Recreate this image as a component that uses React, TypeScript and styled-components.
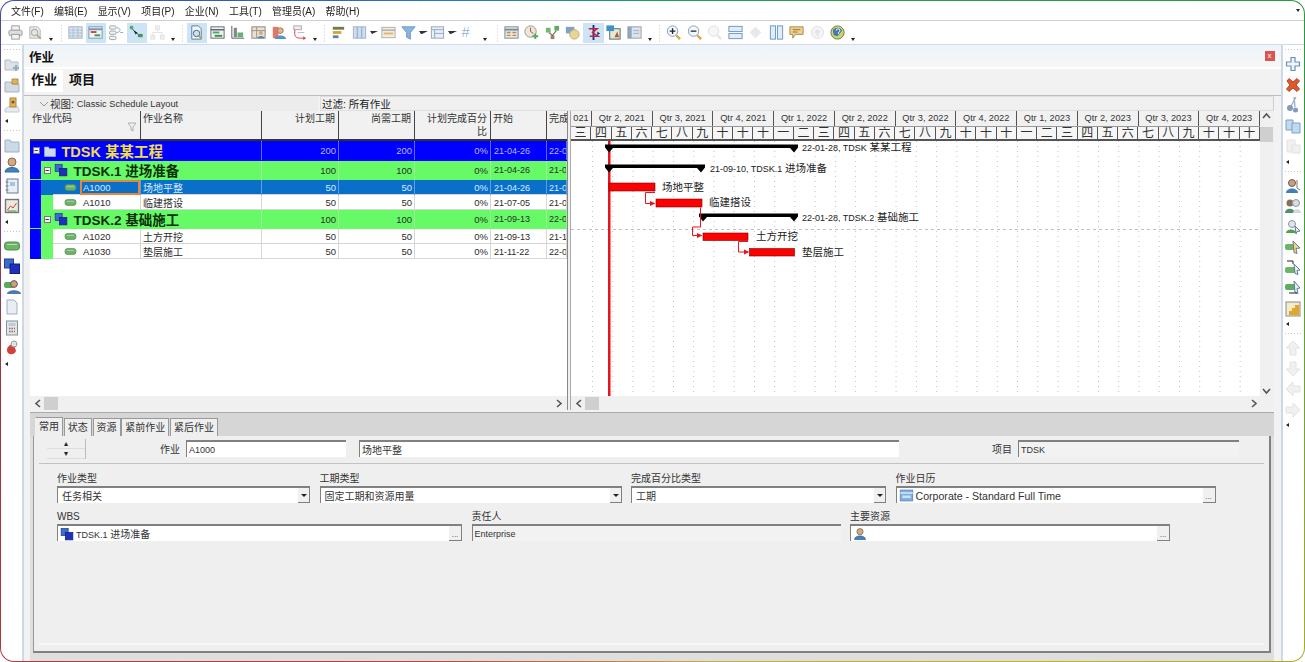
import { ReactNode } from "react";
import styled, { createGlobalStyle } from "styled-components";

const FONT = `"Liberation Sans", "Noto Sans CJK SC", sans-serif`;

const GlobalStyle = createGlobalStyle`
  html, body { margin: 0; padding: 0; background: #fff; }
  body { font-family: ${FONT}; font-size: 10px; color: #2b2b2b; }
  * { box-sizing: border-box; }
  svg { flex: none; }
`;

// ---- icons, all drawn on an 18x18 box ----
const icons: Record<string, ReactNode> = {
  print: (<g stroke="#9a9a9a" fill="#dedede"><rect x="5" y="2" width="8" height="5" fill="#f4f4f4" /><rect x="2" y="6.5" width="14" height="6" rx="2" /><rect x="5" y="11" width="8" height="5" fill="#f4f4f4" /></g>),
  preview: (<g><path d="M3 3h8l3 3v9H3z" fill="#e8e8e8" stroke="#b4b4b4" /><circle cx="8" cy="9" r="3.4" fill="#dfe8df" stroke="#98a498" /><path d="M10.5 11.5l4 4" stroke="#b3a983" strokeWidth="2" /></g>),
  table: (<g><rect x="2" y="3" width="14" height="12" fill="#dbe5f0" stroke="#9bb0c4" /><path d="M2 6.5h14M2 9.5h14M2 12.5h14M6.5 3v12M11.5 3v12" stroke="#aebfd0" /></g>),
  gantt: (<g><rect x="2" y="3" width="14" height="12" fill="#eef4fa" stroke="#7f97ae" /><path d="M2 5.5h14" stroke="#7f97ae" strokeWidth="2" /><rect x="4" y="7.5" width="6" height="2" fill="#d8403a" /><rect x="8" y="11" width="6" height="2" fill="#3a9a4c" /></g>),
  network: (<g fill="#f2f2f2" stroke="#9aa4ae"><rect x="1.5" y="2" width="7" height="3.5" rx="1.5" /><rect x="1.5" y="7.5" width="7" height="3.5" rx="1.5" /><rect x="1.5" y="13" width="7" height="3.5" rx="1.5" /><path d="M9 4c5 0 5 5 0 5M13 9h3" fill="none" /></g>),
  relation: (<g><path d="M3 3l3 4 6 5" stroke="#333" fill="none" /><rect x="2" y="2" width="3.5" height="3.5" fill="#4fae5c" /><rect x="10.5" y="10.5" width="5" height="3.500" fill="#3f9a4e" /><path d="M6 7l2 4 2-2z" fill="#222" /></g>),
  treeFade: (<g stroke="#e2e2e2" fill="#f0f0f0"><rect x="7" y="2" width="4" height="4" /><rect x="2" y="12" width="4" height="4" /><rect x="12" y="12" width="4" height="4" /><path d="M9 6v3H4v3M9 9h5v3" fill="none" /></g>),
  layoutDoc: (<g><path d="M4 2h7l3 3v11H4z" fill="#f2f6fa" stroke="#5d7b95" /><circle cx="9" cy="10" r="3.4" fill="#cfe0f0" stroke="#3f6484" /><path d="M11.5 12.5l3 3" stroke="#b89a3f" strokeWidth="2" /></g>),
  barsGreen: (<g><rect x="2" y="3" width="14" height="12" fill="#eef3ee" stroke="#667" /><path d="M2 6h14" stroke="#667" strokeWidth="1.5" /><rect x="4" y="8" width="7" height="2" fill="#58a55f" /><rect x="6" y="11.5" width="8" height="2" fill="#3c8f48" /></g>),
  chartGreen: (<g><path d="M3 2v13h13" fill="none" stroke="#556" /><rect x="5" y="4" width="3.4" height="10" fill="#7d8e7f" /><rect x="9" y="9" width="6" height="5" fill="#67b06f" /></g>),
  peopleTable: (<g><rect x="2" y="3" width="14" height="12" fill="#e8e2d6" stroke="#8d8476" /><path d="M2 7h14M7 3v12" stroke="#9d9485" /><circle cx="11.5" cy="9.5" r="2.2" fill="#d9a77a" /><path d="M8 15c0-3 7-3 7 0z" fill="#4c86b8" /></g>),
  peopleRed: (<g><rect x="3" y="3" width="6" height="12" fill="#e8776a" /><circle cx="11" cy="7" r="3" fill="#e2b48c" stroke="#96795f" /><path d="M5 16c0-5 12-5 12 0z" fill="#5593ca" /></g>),
  loop: (<g fill="none"><rect x="3" y="2" width="8" height="4" fill="#f0f0f0" stroke="#aaa" /><path d="M4 6v5c0 3 3 4 6 4h5" stroke="#d4453c" /><path d="M13 13l3 2-3 2z" fill="#d4453c" /><path d="M7 9h7" stroke="#bbb" /></g>),
  sortBars: (<g><rect x="3" y="3" width="12" height="3" fill="#6f7d4a" /><rect x="3" y="7.5" width="9" height="3" fill="#d6a23c" /><rect x="3" y="12" width="6" height="3" fill="#65819f" /></g>),
  columns: (<g fill="#d0deef" stroke="#9ab0c7"><rect x="2.5" y="3" width="4" height="12" /><rect x="7" y="3" width="4" height="12" /><rect x="11.5" y="3" width="4" height="12" /></g>),
  banner: (<g><rect x="2" y="3.5" width="14" height="11" fill="#f3ecd9" stroke="#b0adad" /><path d="M2 6.5h14" stroke="#a5a5b2" strokeWidth="1.5" /><rect x="4" y="9" width="10" height="2" fill="#dfb57a" /></g>),
  filter: (<path d="M2 3h14l-5 6v7l-4-2V9z" fill="#8ab6de" stroke="#6a98c4" />),
  group: (<g fill="none" stroke="#90a8c0"><rect x="2.5" y="3" width="13" height="12" fill="#e8eff6" /><path d="M2.5 6h13M6 6v9M6 10h9.500" /></g>),
  sheet: (<g><rect x="2" y="3" width="14" height="12" fill="#f1e7d0" stroke="#6d89a8" /><path d="M2 6h14" stroke="#6d89a8" strokeWidth="2" /><path d="M4 9h4M4 12h4M10 9h4M10 12h4" stroke="#ae8f6a" strokeWidth="1.400" /></g>),
  clockPlus: (<g><circle cx="8" cy="8" r="6" fill="#efe6da" stroke="#9f8f88" /><path d="M8 4v4l3 2" stroke="#a2504a" fill="none" /><path d="M13 10v6M10 13h6" stroke="#4fae5c" strokeWidth="2" /></g>),
  branch: (<g><rect x="2" y="4" width="5" height="5" fill="#75b86a" /><rect x="11" y="2" width="5" height="5" fill="#5faa5f" /><rect x="7" y="12" width="4" height="4" fill="#9b7f65" /><path d="M5 9l4 3 4-5" stroke="#8b7a65" fill="none" strokeWidth="1.300" /></g>),
  stack: (<g><rect x="2" y="3" width="9" height="7" fill="#7da3c8" /><circle cx="11" cy="11" r="5" fill="#e8d596" stroke="#c5ae68" /></g>),
  critical: (<g><path d="M9 1v16" stroke="#1b2f9e" strokeWidth="2" /><path d="M4 5h9l-5 4 6 4H5" fill="none" stroke="#c2252b" strokeWidth="1.500" /><path d="M13 8l3 2-3 2z" fill="#1b2f9e" /></g>),
  chartTree: (<g><rect x="5" y="5" width="11" height="11" fill="#dfeadb" stroke="#4d6b5a" /><rect x="1.500" y="1.500" width="8" height="6" fill="#3f8fc9" /><path d="M10 14l3-6 2 6z" fill="#c2552f" /></g>),
  windowView: (<g><rect x="2" y="3" width="14" height="12" fill="#dbe4ec" stroke="#8f9fb0" /><rect x="2" y="3" width="4" height="12" fill="#8fa6bd" /><path d="M8 7h6M8 10h6" stroke="#9fb0c2" /></g>),
  zoomIn: (<g><circle cx="8" cy="7.500" r="5.500" fill="#f4f8fc" stroke="#7f9bb8" /><path d="M5 7.500h6M8 4.500v6" stroke="#222" strokeWidth="1.400" /><path d="M12 12l4 4" stroke="#d6a848" strokeWidth="2.500" /></g>),
  zoomOut: (<g><circle cx="8" cy="7.500" r="5.500" fill="#f4f8fc" stroke="#7f9bb8" /><path d="M5 7.500h6" stroke="#222" strokeWidth="1.400" /><path d="M12 12l4 4" stroke="#d6a848" strokeWidth="2.500" /></g>),
  zoomFade: (<g><circle cx="8" cy="7.500" r="5.500" fill="#f6f6f6" stroke="#dedede" /><path d="M12 12l4 4" stroke="#e6e6e6" strokeWidth="2.500" /></g>),
  splitH: (<g fill="#e2edf7" stroke="#6d97c0"><rect x="2" y="2.500" width="14" height="5.500" /><rect x="2" y="10" width="14" height="5.500" /></g>),
  diamondFade: (<path d="M9 3l6 6-6 6-6-6z" fill="#e8e8e8" stroke="#f0f0f0" />),
  splitV: (<g fill="#e2edf7" stroke="#6d97c0"><rect x="2.500" y="2" width="5.500" height="14" /><rect x="10" y="2" width="5.500" height="14" /></g>),
  comment: (<g><path d="M2 3h14v8H8l-3 4v-4H2z" fill="#efd28a" stroke="#a08a56" /><path d="M5 6h8M5 8.500h5" stroke="#8d6f3a" /></g>),
  helpFade: (<g><circle cx="9" cy="9" r="6.500" fill="#f4f4f4" stroke="#e0e0e0" /><path d="M9 5l3 4h-2v4H8V9H6z" fill="#e2e2e2" /></g>),
  helpGlobe: (<g><circle cx="9" cy="9" r="7" fill="#c9d56c" stroke="#6d7a4a" /><path d="M4 6c3-3 8-3 10 1l-5 6-4-1z" fill="#4379a8" /><path d="M7.500 7a2 2 0 1 1 2.500 2v1.500" stroke="#fff" fill="none" /></g>),
  folderPlus: (<g><path d="M2 5h5l1 2h7v8H2z" fill="#dbe2ea" stroke="#b0bcc8" /><path d="M13 10v6M10 13h6" stroke="#93adc3" strokeWidth="2" /></g>),
  folderOpen: (<g><path d="M2 6h6l1 2h7v8H2z" fill="#d2dbe3" stroke="#a6b3c0" /><path d="M9 3h6v5H9z" fill="#dcb35f" stroke="#b08c48" /></g>),
  docPin: (<g><path d="M2 13l5-3h7l2 3v3H2z" fill="#e6ebf1" stroke="#c4ccd6" /><rect x="7" y="2" width="6" height="9" fill="#dcb45a" stroke="#a8893f" /><circle cx="10" cy="6" r="1.500" fill="#a13c32" /></g>),
  folder: (<path d="M2 4h5l1 2h8v10H2z" fill="#ccd9e6" stroke="#9eb0c2" />),
  person: (<g><circle cx="9" cy="6" r="4" fill="#d9a77a" stroke="#7b6a55" /><path d="M2 16c0-6 14-6 14 0z" fill="#3f83c0" stroke="#2f6a9f" /></g>),
  notebook: (<g><rect x="4" y="2" width="11" height="14" fill="#e8eef5" stroke="#6b7d90" /><path d="M2.500 5h3M2.500 9h3M2.500 13h3" stroke="#6b7d90" /><rect x="7" y="5" width="5" height="4" fill="#a8c2dc" /></g>),
  chartBox: (<g><rect x="2.500" y="2.500" width="13" height="13" fill="#ece8e2" stroke="#777" strokeWidth="1.400" /><path d="M4.500 13l3-4 2.500 2 3.500-5" fill="none" stroke="#c9463d" /><path d="M4.500 14h9" stroke="#4b9a53" /></g>),
  activity: (<g><rect x="1.500" y="5" width="15" height="8" rx="3" fill="#6fb36a" stroke="#4f8f4c" /><path d="M4 7.500h10" stroke="#b9e0b3" /></g>),
  wbs: (<g><rect x="1.500" y="2" width="9" height="9" fill="#3c6cd0" stroke="#20408c" /><rect x="7" y="7" width="9.500" height="9.500" fill="#1f2fc0" stroke="#16207c" /></g>),
  personGreen: (<g><rect x="1" y="4" width="10" height="6" rx="2" fill="#5bab5c" /><circle cx="11" cy="6" r="3.400" fill="#c9a07b" stroke="#6d5a48" /><path d="M4 16c0-5 14-5 14 0z" fill="#4d7ca6" /></g>),
  page: (<path d="M4 2h7l3 3v11H4z" fill="#e8eef5" stroke="#9fb0c2" />),
  calc: (<g><rect x="3.500" y="2" width="11" height="14" fill="#e4e4e4" stroke="#85909a" /><rect x="5.500" y="4" width="7" height="3" fill="#bccada" /><path d="M6 9.500h6M6 12.500h6" stroke="#8a6a6a" strokeWidth="1.400" strokeDasharray="1.500 1" /></g>),
  redBadge: (<g><path d="M4 11c0-4 4-6 7-5l2 6c-1 4-9 5-9-1z" fill="#d1403a" /><circle cx="11" cy="5" r="3" fill="#e2e2e2" stroke="#999" /></g>),
  plus: (<path d="M7 2.500h4V7h4.500v4H11v4.500H7V11H2.500V7H7z" fill="#eef5fb" stroke="#6a91b6" strokeWidth="1.200" />),
  cross: (<path d="M3 5l2-2.500L9 6l4-3.500L15.500 5 12 9l3.500 4-2.500 2.500L9 12l-4 3.500L2.500 13 6 9z" fill="#dc5a2a" stroke="#b8432a" />),
  scissors: (<g><path d="M12 1L7 10M10 1l1 10" stroke="#9fb0c2" strokeWidth="1.400" fill="none" /><circle cx="6" cy="12" r="3" fill="#7f9cbe" /><circle cx="11.500" cy="14" r="2.500" fill="#7f9cbe" /></g>),
  copy: (<g fill="#c2d8ee" stroke="#7ca0c5"><path d="M2 3h7v10H2z" /><path d="M8 6h8v10H8z" /></g>),
  pasteFade: (<g fill="#f0f0f0" stroke="#e2e2e2"><path d="M3 3h8v12H3z" /><path d="M8 8h8v8H8z" /></g>),
  resUser: (<g><circle cx="8" cy="6" r="3.500" fill="#c9a07b" stroke="#6d5a48" /><path d="M2 16c0-6 12-6 12 0z" fill="#3f7fb8" /><path d="M13 3v8l3 2" stroke="#777" fill="none" /></g>),
  resUsers: (<g><circle cx="6" cy="6" r="3.500" fill="#8a6f58" /><circle cx="12" cy="6" r="3.500" fill="#d9dde2" stroke="#8a96a3" /><path d="M1 16c0-5 9-6 10 0z" fill="#4f8f6a" /><path d="M9 16c0-5 8-5 8 0z" fill="#cfd8e0" /></g>),
  resGreen: (<g><circle cx="8" cy="6" r="3.500" fill="#dfe5ea" stroke="#8a96a3" /><path d="M2 15c0-4 9-5 10 0z" fill="#4fa14f" /><path d="M11 8l5 5-3 .5-1 2.500z" fill="#e6eef6" stroke="#5d7b95" /></g>),
  taskYellow: (<g><rect x="1" y="6" width="11" height="6" rx="2" fill="#6fb36a" /><path d="M9 3l7 7-4 .5 1 5-3-1z" fill="#f0d27e" stroke="#6d7b95" /></g>),
  taskDown: (<g><path d="M3 2h6v3" fill="none" stroke="#222" /><rect x="1" y="8" width="11" height="6" rx="2" fill="#6fb36a" /><path d="M10 5l6 6-3 .5 1 4-3-1z" fill="#e6eef6" stroke="#5d7b95" /></g>),
  taskRight: (<g><rect x="1" y="5" width="11" height="6" rx="2" fill="#5fae5f" /><path d="M10 2l6 7-3 .5 1 5-3-1z" fill="#e6eef6" stroke="#5d7b95" /><path d="M5 14h8" stroke="#222" /></g>),
  goldChart: (<g><rect x="2" y="2" width="14" height="14" fill="#f4ecc8" stroke="#8a8a8a" /><path d="M5 15v-4h3V8h3V5h4v10z" fill="#dfa62c" /></g>),
  up: (<path d="M9 2l7 7h-4v7H6V9H2z" fill="#f0f0f0" stroke="#e2e2e2" />),
  down: (<path d="M9 16l7-7h-4V2H6v7H2z" fill="#f0f0f0" stroke="#e2e2e2" />),
  left: (<path d="M2 9l7-7v4h7v6H9v4z" fill="#f0f0f0" stroke="#e2e2e2" />),
  right: (<path d="M16 9L9 2v4H2v6h7v4z" fill="#f0f0f0" stroke="#e2e2e2" />),
  hash: (<text x="4" y="14" fontSize="15" fill="#a0bcd8" fontFamily="Liberation Sans">#</text>),
  calendar: (<g><rect x="1.500" y="2.500" width="15" height="13" fill="#7fb0e0" stroke="#5a86b5" /><path d="M1.500 6h15" stroke="#e8f0f8" strokeWidth="1.500" /><rect x="4" y="9" width="10" height="3" fill="#cfe0f2" /></g>),
};

const Icon = ({ name, size = 18 }: { name: string; size?: number }) => (
  <svg width={size} height={size} viewBox="0 0 18 18">
    {icons[name]}
  </svg>
);

const ARROWS: Record<string, string> = {
  left: "M6 1L2 4.500 6 8",
  right: "M3 1l4 3.500L3 8",
  up: "M1 6l3.500-4L8 6",
  down: "M1 3l3.500 4L8 3",
};

const Arrow = ({ dir }: { dir: string }) => (
  <ScrollArrow>
    <svg width="9" height="9" viewBox="0 0 9 9">
      <path d={ARROWS[dir]} fill="none" stroke="#555" strokeWidth="1.600" />
    </svg>
  </ScrollArrow>
);

// "|" separator, "v" low caret, "V" low caret with room after it, "^" caret hard beside its button, "*x" pressed button
const TOOLS: string[] = [
  "print", "preview", "v", "|", "table", "*gantt", "network", "*relation", "treeFade", "v", "|",
  "*layoutDoc", "barsGreen", "chartGreen", "peopleTable", "peopleRed", "loop", "v", "|",
  "sortBars", "columns", "^", "banner", "filter", "^", "group", "^", "hash", "V", "|",
  "sheet", "clockPlus", "branch", "stack", "*critical", "chartTree", "windowView", "v", "|",
  "zoomIn", "zoomOut", "zoomFade", "splitH", "diamondFade", "splitV", "comment", "helpFade", "helpGlobe", "v",
];

const LEFT_SIDE = [["folderPlus", "folderOpen", "docPin"], ["folder", "person", "notebook", "chartBox"], ["activity", "wbs", "personGreen", "page", "calc", "redBadge"]];
const RIGHT_SIDE = [["plus", "cross", "scissors", "copy", "pasteFade"], ["resUser", "resUsers", "resGreen", "taskYellow", "taskDown", "taskRight", "goldChart"], ["up", "down", "left", "right"]];

const MENUS = ["文件(F)", "编辑(E)", "显示(V)", "项目(P)", "企业(N)", "工具(T)", "管理员(A)", "帮助(H)"];
const QUARTERS = ["021", "Qtr 2, 2021", "Qtr 3, 2021", "Qtr 4, 2021", "Qtr 1, 2022", "Qtr 2, 2022", "Qtr 3, 2022", "Qtr 4, 2022", "Qtr 1, 2023", "Qtr 2, 2023", "Qtr 3, 2023", "Qtr 4, 2023"];
const YEAR_MONTHS = ["一", "二", "三", "四", "五", "六", "七", "八", "九", "十", "十", "十"];
const MONTHS = ["三", ...YEAR_MONTHS.slice(3), ...YEAR_MONTHS, ...YEAR_MONTHS.slice(0, 12)];

type RowKind = "project" | "wbs" | "task";
interface Row {
  kind: RowKind;
  code: string;
  name: string;
  plan: number;
  left: number;
  start: string;
  end: string;
  selected?: boolean;
}
const ROWS: Row[] = [
  { kind: "project", code: "TDSK", name: "某某工程", plan: 200, left: 200, start: "21-04-26", end: "22-01-28" },
  { kind: "wbs", code: "TDSK.1", name: "进场准备", plan: 100, left: 100, start: "21-04-26", end: "21-09-10" },
  { kind: "task", code: "A1000", name: "场地平整", plan: 50, left: 50, start: "21-04-26", end: "21-06-14", selected: true },
  { kind: "task", code: "A1010", name: "临建搭设", plan: 50, left: 50, start: "21-07-05", end: "21-09-10" },
  { kind: "wbs", code: "TDSK.2", name: "基础施工", plan: 100, left: 100, start: "21-09-13", end: "22-01-28" },
  { kind: "task", code: "A1020", name: "土方开挖", plan: 50, left: 50, start: "21-09-13", end: "21-11-19" },
  { kind: "task", code: "A1030", name: "垫层施工", plan: 50, left: 50, start: "21-11-22", end: "22-01-28" },
];

const App = () => (
  <>
    <GlobalStyle />
    <Frame>
      <MenuBar>
        {MENUS.map((m) => (
          <MenuItem key={m}>{m}</MenuItem>
        ))}
        <MenuEnd />
      </MenuBar>
      <ToolBar>
        {TOOLS.map((t, i) => {
          if (t === "|") return <ToolSep key={i} />;
          if (t === "v") return <LowCaret key={i} />;
          if (t === "V") return <LowCaret key={i} $wide />;
          if (t === "^") return <TightCaret key={i} />;
          const active = t.startsWith("*");
          const name = active ? t.slice(1) : t;
          return (
            <ToolBtn key={i} $active={active}>
              <Icon name={name} size={17} />
            </ToolBtn>
          );
        })}
      </ToolBar>
      <Body>
        <SideBar $width={21}>
          {LEFT_SIDE.map((group, g) => (
            <SideGroup key={g} group={group} />
          ))}
        </SideBar>
        <Main>
          <TitleBar>
            <Title>作业</Title>
            <CloseBtn>x</CloseBtn>
          </TitleBar>
          <TopTabs>
            <TopTab $active>作业</TopTab>
            <TopTab>项目</TopTab>
          </TopTabs>
          <Workspace>
            <ViewBar>
              <ViewLeft>
                <Chevron viewBox="0 0 10 6" width="10" height="6">
                  <path d="M1 1l4 4 4-4" fill="none" stroke="#999" />
                </Chevron>
                视图: <LatinText $size={9.25}>Classic Schedule Layout</LatinText>
              </ViewLeft>
              <ViewRight>过滤: 所有作业</ViewRight>
            </ViewBar>
            <Split>
              <TablePane>
                <TableBox>
                  <HeadRow>
                    <HeadCell>
                      作业代码
                      <SortMark viewBox="0 0 8 10" width="8" height="10">
                        <path d="M0 1h8L5 5v4L3 8V5z" fill="none" stroke="#b0b0b0" />
                      </SortMark>
                    </HeadCell>
                    <HeadCell>作业名称</HeadCell>
                    <HeadCell $right>计划工期</HeadCell>
                    <HeadCell $right>尚需工期</HeadCell>
                    <HeadCell $right>
                      计划完成百分
                      <br />比
                    </HeadCell>
                    <HeadCell>开始</HeadCell>
                    <HeadCell $clip>完成</HeadCell>
                  </HeadRow>
                  {ROWS.map((r) => (
                    <DataRow key={r.code} $kind={r.kind} $selected={r.selected}>
                      <CodeCell $span={r.kind !== "task"}>
                        {r.kind !== "project" && <Stripe $color="#0000ff" $width={11} />}
                        {r.kind === "task" && (
                          <Stripe $color={r.selected ? "#0a6fc9" : "#66fb66"} $width={12} />
                        )}
                        {r.kind === "project" && (
                          <>
                            <Toggle>−</Toggle>
                            <Icon name="folder" size={14} />
                            <ProjectTitle>
                              {r.code} {r.name}
                            </ProjectTitle>
                          </>
                        )}
                        {r.kind === "wbs" && (
                          <>
                            <Toggle>−</Toggle>
                            <Icon name="wbs" size={14} />
                            <WbsTitle>
                              {r.code} {r.name}
                            </WbsTitle>
                          </>
                        )}
                        {r.kind === "task" && (
                          <>
                            <TaskIcon>
                              <Icon name="activity" size={13} />
                            </TaskIcon>
                            <TaskCode $selected={r.selected}>{r.code}</TaskCode>
                          </>
                        )}
                      </CodeCell>
                      {r.kind === "task" && <NameCell>{r.name}</NameCell>}
                      <NumCell>{r.plan}</NumCell>
                      <NumCell>{r.left}</NumCell>
                      <NumCell>0%</NumCell>
                      <DateCell>{r.start}</DateCell>
                      <DateCell $clip>{r.end}</DateCell>
                    </DataRow>
                  ))}
                </TableBox>
                <HScroll>
                  <Arrow dir="left" />
                  <Thumb />
                  <Spacer />
                  <Arrow dir="right" />
                </HScroll>
              </TablePane>
              <Splitter />
              <GanttPane>
                <GanttTop>
                  <GanttMain>
                    <QuarterRow>
                      {QUARTERS.map((q) => (
                        <QuarterCell key={q}>{q}</QuarterCell>
                      ))}
                    </QuarterRow>
                    <MonthRow>
                      {MONTHS.map((m, i) => (
                        <MonthCell key={i}>{m}</MonthCell>
                      ))}
                    </MonthRow>
                    <GanttChart />
                  </GanttMain>
                  <VScroll>
                    <Arrow dir="up" />
                    <VThumb />
                    <Spacer />
                    <Arrow dir="down" />
                  </VScroll>
                </GanttTop>
                <HScroll>
                  <Arrow dir="left" />
                  <Thumb />
                  <Spacer />
                  <Arrow dir="right" />
                  <CornerGap />
                </HScroll>
              </GanttPane>
            </Split>
          </Workspace>
          <Detail>
            <DetailTabs>
              <DetailTab $active>常用</DetailTab>
              <DetailTab>状态</DetailTab>
              <DetailTab>资源</DetailTab>
              <DetailTab>紧前作业</DetailTab>
              <DetailTab>紧后作业</DetailTab>
            </DetailTabs>
            <DetailPanel>
              <DetailHead>
                <Spinner>
                  <SpinBtn>▴</SpinBtn>
                  <SpinBtn>▾</SpinBtn>
                </Spinner>
                <HeadLabel $width={100}>作业</HeadLabel>
                <Field $width={160}>
                  <LatinText>A1000</LatinText>
                </Field>
                <Field $width={540} $left={13}>
                  场地平整
                </Field>
                <HeadLabel $width={119}>项目</HeadLabel>
                <Field $width={221} $muted>
                  <LatinText>TDSK</LatinText>
                </Field>
              </DetailHead>
              <FieldBox>
                <FieldRow $cols="253px 302px 255px 320px">
                  <FieldGroup>
                    <FieldLabel>作业类型</FieldLabel>
                    <Field>
                      <Grow>任务相关</Grow>
                      <DropBtn />
                    </Field>
                  </FieldGroup>
                  <FieldGroup>
                    <FieldLabel>工期类型</FieldLabel>
                    <Field>
                      <Grow>固定工期和资源用量</Grow>
                      <DropBtn />
                    </Field>
                  </FieldGroup>
                  <FieldGroup>
                    <FieldLabel>完成百分比类型</FieldLabel>
                    <Field>
                      <Grow>工期</Grow>
                      <DropBtn />
                    </Field>
                  </FieldGroup>
                  <FieldGroup>
                    <FieldLabel>作业日历</FieldLabel>
                    <Field>
                      <Icon name="calendar" size={15} />
                      <Grow>
                        <LatinText $size={10.6}>Corporate - Standard Full Time</LatinText>
                      </Grow>
                      <DotsBtn>...</DotsBtn>
                    </Field>
                  </FieldGroup>
                </FieldRow>
                <FieldRow $cols="405px 369px 320px">
                  <FieldGroup>
                    <FieldLabel>WBS</FieldLabel>
                    <Field>
                      <Icon name="wbs" size={14} />
                      <Grow>
                        <LatinText>TDSK.1</LatinText> 进场准备
                      </Grow>
                      <DotsBtn>...</DotsBtn>
                    </Field>
                  </FieldGroup>
                  <FieldGroup>
                    <FieldLabel>责任人</FieldLabel>
                    <Field $muted>
                      <LatinText>Enterprise</LatinText>
                    </Field>
                  </FieldGroup>
                  <FieldGroup>
                    <FieldLabel>主要资源</FieldLabel>
                    <Field>
                      <Icon name="person" size={14} />
                      <Grow />
                      <DotsBtn>...</DotsBtn>
                    </Field>
                  </FieldGroup>
                </FieldRow>
              </FieldBox>
            </DetailPanel>
          </Detail>
        </Main>
        <SideBar $width={21.5}>
          {RIGHT_SIDE.map((group, g) => (
            <SideGroup key={g} group={group} />
          ))}
        </SideBar>
      </Body>
    </Frame>
  </>
);

const SideGroup = ({ group }: { group: string[] }) => (
  <>
    <Grip />
    {group.map((n) => (
      <SideBtn key={n}>
        <Icon name={n} />
      </SideBtn>
    ))}
    <SideCaret />
  </>
);

const GanttLabel = ({ x, y, latin, cjk }: { x: number; y: number; latin?: string; cjk: string }) => (
  <ChartText x={x} y={y}>
    {latin && <LatinSpan>{latin} </LatinSpan>}
    {cjk}
  </ChartText>
);

// Page coordinates are used for the viewBox so the chart reads like the picture
const GanttChart = () => {
  const vlines = Array.from({ length: 34 }, (_, i) => 592.5 + i * 20.24);
  const summary = (x1: number, x2: number, y: number) =>
    `M${x1 - 4} ${y}H${x2 + 4}V${y + 3}L${x2} ${y + 8}L${x2 - 4} ${y + 3.5}H${x1 + 4}L${x1} ${y + 8}L${x1 - 4} ${y + 3}Z`;
  return (
    <ChartSvg viewBox="571 141 689 255" width="689" height="255">
      {vlines.map((x) => (
        <line key={x} x1={x} x2={x} y1="141" y2="396" stroke="#c4c4c4" strokeDasharray="1 4" />
      ))}
      <line x1="571" x2="1260" y1="229.500" y2="229.500" stroke="#c0c0c0" strokeDasharray="3 3" />
      <rect x="608" y="141" width="2.500" height="255" fill="#e8141c" />
      <path d={summary(609, 794, 144.500)} fill="#000" />
      <path d={summary(609, 701, 164.500)} fill="#000" />
      <path d={summary(703, 794, 213.500)} fill="#000" />
      <BarRect x="609" y="183" width="46" height="8" />
      <BarRect x="656" y="199" width="46" height="8" />
      <BarRect x="703" y="233" width="45" height="7.500" />
      <BarRect x="749.500" y="248.500" width="45" height="7.500" />
      <g fill="none" stroke="#e8141c">
        <path d="M655 192.500H645.500V203.500H651" />
        <path d="M700.500 207.500V227H692.500V235.500H698" />
        <path d="M748 241.500H738.500V252H745" />
      </g>
      <g fill="#e8141c">
        <path d="M650 201l5.500 2.500-5.500 2.500z" />
        <path d="M697 233l5.500 2.500-5.500 2.500z" />
        <path d="M744 249.500l5.500 2.500-5.500 2.500z" />
      </g>
      <GanttLabel x={802} y={151} latin="22-01-28, TDSK" cjk="某某工程" />
      <GanttLabel x={710} y={172} latin="21-09-10, TDSK.1" cjk="进场准备" />
      <GanttLabel x={662} y={191} cjk="场地平整" />
      <GanttLabel x={709} y={206} cjk="临建搭设" />
      <GanttLabel x={802} y={221} latin="22-01-28, TDSK.2" cjk="基础施工" />
      <GanttLabel x={756} y={240} cjk="土方开挖" />
      <GanttLabel x={802} y={256} cjk="垫层施工" />
    </ChartSvg>
  );
};

const Frame = styled.div`
  width: 1305px;
  height: 662px;
  display: flex;
  flex-direction: column;
  overflow: hidden;
  border: 1px solid transparent;
  border-radius: 14px;
  background:
    linear-gradient(#fff, #fff) padding-box,
    conic-gradient(from 0deg at 50% 50%, #18a058 0deg, #2a9a3c 70deg, #c9b21c 130deg, #c9a93a 170deg, #c2403a 215deg, #a8323c 265deg, #3b4fb0 300deg, #1e7fc0 330deg, #18a058 360deg) border-box;
  filter: blur(0.35px);
`;

const MenuBar = styled.div`
  height: 20px;
  flex: none;
  display: flex;
  align-items: center;
  padding-left: 10px;
  border-bottom: 1px solid #cfcfcf;
`;

const MenuItem = styled.span`
  margin-right: 10.25px;
  font-size: 10px;
  color: #222;
`;

const MenuEnd = styled.span`
  margin-left: auto;
  margin-right: 4px;
  border-left: 2.5px solid transparent;
  border-right: 2.5px solid transparent;
  border-top: 3px solid #222;
`;

const ToolBar = styled.div`
  height: 24px;
  flex: none;
  display: flex;
  align-items: center;
  padding-left: 4px;
  border-bottom: 1px solid #cfdbe8;
`;

const ToolBtn = styled.span<{ $active?: boolean }>`
  width: 20.5px;
  height: 20px;
  flex: none;
  display: flex;
  align-items: center;
  justify-content: center;
  background: ${({ $active }) => ($active ? "#cde4f7" : "transparent")};
`;

const ToolSep = styled.span`
  width: 8px;
  height: 18px;
  flex: none;
  background: linear-gradient(#c6c6c6 50%, transparent 50%) center / 1px 3px repeat-y;
`;

const LowCaret = styled.span<{ $wide?: boolean }>`
  width: ${({ $wide }) => ($wide ? 16 : 11)}px;
  height: 20px;
  flex: none;
  position: relative;
  &::after {
    content: "";
    position: absolute;
    left: ${({ $wide }) => ($wide ? 6 : 3)}px;
    bottom: 2px;
    border-left: 2.5px solid transparent;
    border-right: 2.5px solid transparent;
    border-top: 3px solid #222;
  }
`;

const TightCaret = styled.span`
  width: 8.500px;
  flex: none;
  height: 0;
  border-left: 2.5px solid transparent;
  border-right: 6px solid transparent;
  border-top: 3px solid #333;
`;

const Body = styled.div`
  flex: 1;
  min-height: 0;
  display: flex;
`;

const SideBar = styled.div<{ $width: number }>`
  width: ${({ $width }) => $width}px;
  flex: none;
  display: flex;
  flex-direction: column;
  align-items: center;
`;

const Grip = styled.div`
  width: 16px;
  height: 9px;
  flex: none;
  background: linear-gradient(90deg, #c6c6c6 50%, transparent 50%) 0 50% / 3px 1px repeat-x;
`;

const SideBtn = styled.div`
  height: 20.5px;
  flex: none;
  display: flex;
  align-items: center;
  justify-content: center;
`;

const SideCaret = styled.div`
  width: 16px;
  height: 10px;
  flex: none;
  position: relative;
  &::after {
    content: "";
    position: absolute;
    left: 1px;
    top: 3px;
    border-top: 2.5px solid transparent;
    border-bottom: 2.5px solid transparent;
    border-right: 3px solid #222;
  }
`;

const Main = styled.div`
  flex: 1;
  min-width: 0;
  display: flex;
  flex-direction: column;
  background: #f2f2f2;
  border-left: 2px solid #cdd9e4;
  border-right: 2px solid #cdd9e4;
`;

const TitleBar = styled.div`
  height: 22px;
  flex: none;
  display: flex;
  align-items: center;
  justify-content: space-between;
  padding: 0 6px 0 5px;
  background: linear-gradient(#eef4fa, #f6f6f6);
`;

const Title = styled.span`
  font-size: 12.5px;
  font-weight: 700;
  color: #111;
`;

const CloseBtn = styled.span`
  width: 10px;
  height: 10px;
  background: #d9534f;
  color: #fff;
  font-size: 8px;
  line-height: 9px;
  text-align: center;
`;

const TopTabs = styled.div`
  height: 29px;
  flex: none;
  display: flex;
  align-items: flex-start;
  padding: 1px 0 0 1px;
  border-top: 2px solid #fff;
  border-bottom: 1px solid #bdbdbd;
`;

const TopTab = styled.span<{ $active?: boolean }>`
  height: 22px;
  width: 38px;
  text-align: center;
  font-size: 13px;
  line-height: 20px;
  font-weight: 700;
  color: #111;
  background: ${({ $active }) => ($active ? "#fff" : "transparent")};
`;

const Workspace = styled.div`
  flex: none;
  padding: 0 7px 0 6px;
`;

const ViewBar = styled.div`
  height: 15px;
  display: flex;
  gap: 2px;
`;

const ViewLeft = styled.div`
  width: 288px;
  display: flex;
  align-items: center;
  padding-left: 9px;
  background: #ececec;
  color: #333;
  font-size: 10.5px;
  white-space: pre;
`;

const ViewRight = styled.div`
  flex: 1;
  display: flex;
  align-items: center;
  padding-left: 1px;
  background: #f0f0f0;
  border: 1px solid #dedede;
  border-right-color: #cfcfcf;
  font-size: 10.5px;
  color: #222;
`;

const Chevron = styled.svg`
  margin-right: 1px;
`;

const LatinText = styled.span<{ $size?: number }>`
  font-size: ${({ $size }) => $size ?? 9}px;
`;

const Split = styled.div`
  height: 299px;
  display: flex;
`;

const TablePane = styled.div`
  width: 537px;
  flex: none;
  display: flex;
  flex-direction: column;
`;

const TableBox = styled.div`
  flex: 1;
  min-height: 0;
  background: #fff;
`;

const COLS = "111px 121px 77px 76px 76px 56px 20px";

const HeadRow = styled.div`
  height: 30px;
  display: grid;
  grid-template-columns: ${COLS};
  background: #f1f1f1;
  border-bottom: 2px solid #333;
`;

const HeadCell = styled.div<{ $right?: boolean; $clip?: boolean }>`
  position: relative;
  padding: 1px 3px 0 2px;
  line-height: 13px;
  font-size: 10px;
  color: #333;
  text-align: ${({ $right }) => ($right ? "right" : "left")};
  border-right: ${({ $clip }) => ($clip ? "none" : "1px solid #444")};
  overflow: hidden;
  white-space: ${({ $clip }) => ($clip ? "nowrap" : "normal")};
`;

const SortMark = styled.svg`
  position: absolute;
  right: 4px;
  top: 11px;
`;

const ROW_H: Record<RowKind, number> = { project: 20, wbs: 19, task: 15 };
const ROW_BG: Record<RowKind, string> = { project: "#0000ff", wbs: "#66fb66", task: "#ffffff" };

const DataRow = styled.div<{ $kind: RowKind; $selected?: boolean }>`
  height: ${({ $kind }) => ROW_H[$kind]}px;
  display: grid;
  grid-template-columns: ${COLS};
  align-items: stretch;
  font-size: 9.5px;
  background: ${({ $kind, $selected }) => ($selected ? "#0a6fc9" : ROW_BG[$kind])};
  color: ${({ $kind, $selected }) => ($selected ? "#d8ecff" : $kind === "project" ? "#b9b9e8" : "#2b2b2b")};
  border-bottom: 1px solid ${({ $kind }) => ($kind === "task" ? "#d6d6d6" : "transparent")};
  & > div {
    border-right: 1px solid ${({ $kind, $selected }) => ($selected ? "#5f9fdc" : $kind === "project" ? "#6464ff" : $kind === "wbs" ? "#9cf09c" : "#d6d6d6")};
  }
`;

const CodeCell = styled.div<{ $span?: boolean }>`
  grid-column: ${({ $span }) => ($span ? "span 2" : "auto")};
  display: flex;
  align-items: center;
  overflow: hidden;
  white-space: nowrap;
`;

const Stripe = styled.span<{ $color: string; $width: number }>`
  width: ${({ $width }) => $width}px;
  height: 100%;
  flex: none;
  background: ${({ $color }) => $color};
`;

const Toggle = styled.span`
  width: 7px;
  height: 7px;
  margin: 0 3px 0 2.5px;
  flex: none;
  background: #f0f0f0;
  border: 1px solid #777;
  color: #111;
  font-size: 7px;
  line-height: 5px;
  text-align: center;
  font-weight: 700;
`;

const ProjectTitle = styled.span`
  margin-left: 5px;
  font-size: 14.5px;
  font-weight: 700;
  color: #f2de4a;
`;

const WbsTitle = styled.span`
  margin-left: 6px;
  font-size: 13.5px;
  font-weight: 700;
  color: #0a2f0a;
`;

const TaskIcon = styled.span`
  width: 27px;
  flex: none;
  display: flex;
  padding-left: 11px;
`;

const TaskCode = styled.span<{ $selected?: boolean }>`
  flex: 1;
  height: 100%;
  display: flex;
  align-items: center;
  padding-left: 1px;
  border: 2px solid ${({ $selected }) => ($selected ? "#e8853c" : "transparent")};
`;

const NameCell = styled.div`
  display: flex;
  align-items: center;
  padding-left: 2px;
  font-size: 10px;
`;

const NumCell = styled.div`
  display: flex;
  align-items: center;
  justify-content: flex-end;
  padding-right: 2px;
`;

const DateCell = styled.div<{ $clip?: boolean }>`
  display: flex;
  align-items: center;
  padding-left: ${({ $clip }) => ($clip ? "2px" : "3px")};
  font-size: 9px;
  overflow: hidden;
  white-space: nowrap;
`;

const HScroll = styled.div`
  height: 14px;
  flex: none;
  display: flex;
  align-items: center;
  background: #f0f0f0;
  padding: 0 3px;
`;

const ScrollArrow = styled.span`
  width: 11px;
  height: 11px;
  flex: none;
  display: flex;
  align-items: center;
  justify-content: center;
`;

const Thumb = styled.span`
  width: 14px;
  height: 13px;
  flex: none;
  background: #cfcfcf;
`;

const Spacer = styled.span`
  flex: 1;
`;

const CornerGap = styled.span`
  width: 12px;
  flex: none;
`;

const Splitter = styled.div`
  width: 4px;
  flex: none;
  background: #f0f0f0;
  border-left: 1px solid #888;
  border-right: 1px solid #aaa;
`;

const GanttPane = styled.div`
  flex: 1;
  min-width: 0;
  display: flex;
  flex-direction: column;
`;

const GanttTop = styled.div`
  flex: 1;
  min-height: 0;
  display: flex;
`;

const GanttMain = styled.div`
  width: 689px;
  flex: none;
  background: #fff;
`;

const QuarterRow = styled.div`
  height: 15px;
  display: grid;
  grid-template-columns: 21px repeat(11, 1fr);
  background: #f1f1f1;
`;

const QuarterCell = styled.div`
  text-align: center;
  font-size: 9.25px;
  line-height: 15px;
  color: #333;
  border-right: 1px solid #555;
  overflow: hidden;
`;

const MonthRow = styled.div`
  height: 15px;
  display: grid;
  grid-template-columns: repeat(34, 1fr);
  background: #f6f6f6;
  border-top: 1px solid #999;
  border-bottom: 2px solid #555;
`;

const MonthCell = styled.div`
  text-align: center;
  font-size: 12px;
  line-height: 12px;
  color: #333;
  border-right: 1px solid #555;
  overflow: hidden;
`;

const ChartSvg = styled.svg`
  display: block;
`;

const BarRect = styled.rect`
  fill: #f00;
  stroke: #700;
  stroke-width: 0.6;
`;

const ChartText = styled.text`
  font-family: ${FONT};
  font-size: 10.5px;
  fill: #222;
`;

const LatinSpan = styled.tspan`
  font-size: 9px;
`;

const VScroll = styled.div`
  flex: 1;
  display: flex;
  flex-direction: column;
  align-items: center;
  background: #f0f0f0;
`;

const VThumb = styled.span`
  width: 13px;
  height: 15px;
  margin-top: 5px;
  flex: none;
  background: #cfcfcf;
`;

const Detail = styled.div`
  flex: 1;
  min-height: 0;
  display: flex;
  flex-direction: column;
  margin: 2px 7px 0 6px;
  padding-bottom: 8px;
  background: #dedede;
  border-top: 1px solid #aaa;
`;

const DetailTabs = styled.div`
  height: 23px;
  flex: none;
  display: flex;
  align-items: flex-end;
  gap: 0.75px;
  padding-left: 5px;
  background: #d6d6d6;
`;

const DetailTab = styled.span<{ $active?: boolean }>`
  height: ${({ $active }) => ($active ? 19 : 18)}px;
  padding: 0 3px;
  font-size: 10px;
  line-height: 17px;
  color: #333;
  background: #efefef;
  border: 1px solid #999;
  border-bottom: none;
  border-left-color: ${({ $active }) => ($active ? "#efefef" : "#999")};
`;

const DetailPanel = styled.div`
  flex: 1;
  min-height: 0;
  display: flex;
  flex-direction: column;
  margin: 0 3px;
  background: #efefef;
  border: 1px solid #999;
  border-top: none;
  border-right: 2px solid #808080;
  border-bottom: 2px solid #808080;
`;

const DetailHead = styled.div`
  height: 27px;
  flex: none;
  display: flex;
  align-items: center;
  padding: 0 0 2px 13px;
`;

const Spinner = styled.div`
  width: 39px;
  height: 20px;
  flex: none;
  display: flex;
  flex-direction: column;
  border-right: 1px solid #bbb;
  border-bottom: 1px solid #bbb;
`;

const SpinBtn = styled.span`
  flex: 1;
  text-align: center;
  font-size: 8px;
  line-height: 9px;
  color: #222;
  border-bottom: 1px solid #ddd;
`;

const HeadLabel = styled.span<{ $width: number }>`
  width: ${({ $width }) => $width}px;
  flex: none;
  padding-right: 6px;
  text-align: right;
  font-size: 10px;
  color: #333;
`;

const Field = styled.div<{ $width?: number; $left?: number; $muted?: boolean }>`
  width: ${({ $width }) => ($width ? `${$width}px` : "auto")};
  height: 17px;
  flex: none;
  display: flex;
  align-items: center;
  margin-left: ${({ $left }) => $left ?? 0}px;
  padding-left: 2px;
  background: ${({ $muted }) => ($muted ? "#f2f2f2" : "#fff")};
  border-top: 2px solid #808080;
  border-left: 1px solid #808080;
  font-size: 10px;
  color: #333;
`;

const Grow = styled.span`
  flex: 1;
  min-width: 0;
  padding-left: 2px;
  white-space: nowrap;
`;

const DropBtn = styled.span`
  width: 12px;
  height: 15px;
  flex: none;
  position: relative;
  background: #f0f0f0;
  border-right: 1px solid #808080;
  border-bottom: 1px solid #808080;
  &::after {
    content: "";
    position: absolute;
    left: 3px;
    top: 6px;
    border-left: 3px solid transparent;
    border-right: 3px solid transparent;
    border-top: 3px solid #222;
  }
`;

const DotsBtn = styled.span`
  width: 13px;
  height: 15px;
  flex: none;
  text-align: center;
  font-size: 8px;
  line-height: 17px;
  color: #444;
  background: #f0f0f0;
  border-right: 1px solid #808080;
  border-bottom: 1px solid #808080;
`;

const FieldBox = styled.div`
  flex: 1;
  margin: 0 5px 6px;
  padding: 7px 0 0 18px;
  display: flex;
  flex-direction: column;
  gap: 6px;
  border-top: 1px solid #c2c2c2;
  border-bottom: 2px solid #f8f8f8;
`;

const FieldRow = styled.div<{ $cols: string }>`
  display: grid;
  grid-template-columns: ${({ $cols }) => $cols};
  column-gap: 9.5px;
`;

const FieldGroup = styled.div`
  display: flex;
  flex-direction: column;
`;

const FieldLabel = styled.span`
  height: 15px;
  font-size: 10px;
  line-height: 15px;
  color: #333;
`;

export default App;
